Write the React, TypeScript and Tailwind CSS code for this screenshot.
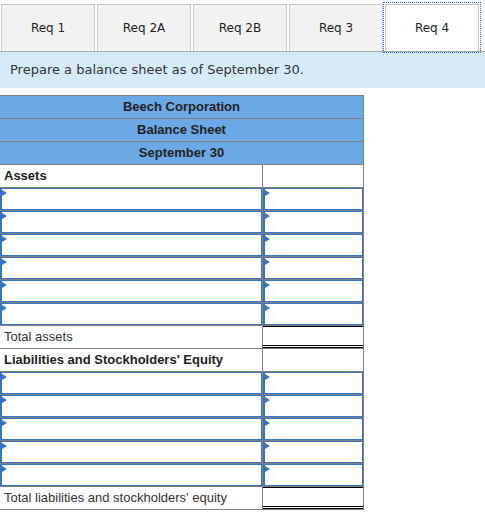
import React from "react";

const tabs = ["Req 1", "Req 2A", "Req 2B", "Req 3", "Req 4"];

type Row =
  | { kind: "title"; text: string }
  | { kind: "label"; text: string; bold?: boolean; total?: boolean }
  | { kind: "input" };

const rows: Row[] = [
  { kind: "title", text: "Beech Corporation" },
  { kind: "title", text: "Balance Sheet" },
  { kind: "title", text: "September 30" },
  { kind: "label", text: "Assets", bold: true },
  { kind: "input" },
  { kind: "input" },
  { kind: "input" },
  { kind: "input" },
  { kind: "input" },
  { kind: "input" },
  { kind: "label", text: "Total assets", total: true },
  { kind: "label", text: "Liabilities and Stockholders' Equity", bold: true },
  { kind: "input" },
  { kind: "input" },
  { kind: "input" },
  { kind: "input" },
  { kind: "input" },
  { kind: "label", text: "Total liabilities and stockholders' equity", total: true },
];

// 带蓝色小三角的输入框
function InputBox() {
  return (
    <div className="relative h-full w-full border border-l-2 border-[#3a74c0] bg-white">
      <span className="absolute left-0 top-[1px] h-0 w-0 border-y-[3px] border-l-[5px] border-y-transparent border-l-[#3a74c0]" />
    </div>
  );
}

export default function App() {
  return (
    <div className="w-[485px] h-[514px] bg-white overflow-hidden" style={{ fontFamily: "'DejaVu Sans', Verdana, sans-serif" }}>
      {/* 标签页 */}
      <div className="flex gap-[2px] pl-[1px] pt-[4px] border-b border-[#a8a8a8]">
        {tabs.map((t, i) => {
          const active = i === tabs.length - 1;
          return (
            <div
              key={t}
              className={`w-[94px] h-[47px] flex items-center justify-center text-[12px] text-[#222] border border-b-0 border-[#c8c8c8] ${
                active ? "bg-white outline outline-1 outline-dotted outline-offset-1 outline-[#2f6fc4]" : "bg-[#f2f2f2]"
              }`}
            >
              {t}
            </div>
          );
        })}
      </div>

      {/* 说明 */}
      <div className="h-[36px] bg-[#d6ebfa] flex items-center pl-[10px] text-[13px] text-[#333]">
        Prepare a balance sheet as of September 30.
      </div>

      {/* 资产负债表 */}
      <div
        className="mt-[7px] w-[364px] border-t border-[#808080] text-[13px] text-[#222]"
        style={{ fontFamily: "'Liberation Sans', Arial, sans-serif" }}
      >
        {rows.map((r, i) => {
          if (r.kind === "title") {
            return (
              <div key={i} className="h-[23px] flex items-center justify-center bg-[#6ca8e6] border-b border-r border-[#808080] font-bold">
                {r.text}
              </div>
            );
          }
          if (r.kind === "label") {
            return (
              <div key={i} className="h-[23px] flex border-b border-[#808080]">
                <div className={`w-[263px] flex items-center pl-[4px] border-r border-[#808080] ${r.bold ? "font-bold" : "text-[#333]"}`}>
                  {r.text}
                </div>
                <div className="flex-1 border-r border-[#808080]">
                  {r.total && (
                    <div className="h-full border-t border-b-[3px] border-black [border-bottom-style:double]" />
                  )}
                </div>
              </div>
            );
          }
          return (
            <div key={i} className="h-[23px] flex border-b border-[#808080]">
              <div className="w-[263px] border-r border-[#808080]">
                <InputBox />
              </div>
              <div className="flex-1 border-r border-[#808080]">
                <InputBox />
              </div>
            </div>
          );
        })}
      </div>
    </div>
  );
}
